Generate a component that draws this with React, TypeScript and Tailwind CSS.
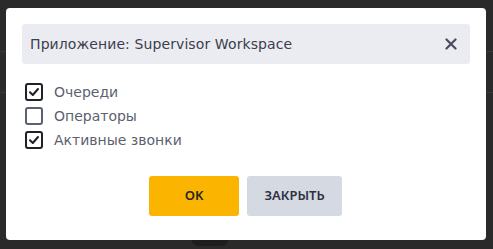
import React from "react";

function Check({ checked }: { checked: boolean }) {
  return (
    <span
      className={
        "flex h-[18px] w-[18px] shrink-0 items-center justify-center rounded-[3px] border-2 " +
        (checked ? "border-[#1f2128]" : "border-[#5b6072]")
      }
    >
      {checked && (
        <svg width="12" height="12" viewBox="0 0 12 12">
          <path d="M2 6.2 L4.8 9 L10 3" fill="none" stroke="#1f2128" strokeWidth="2" strokeLinecap="round" strokeLinejoin="round" />
        </svg>
      )}
    </span>
  );
}

export default function App() {
  const items = [
    { label: "Очереди", checked: true },
    { label: "Операторы", checked: false },
    { label: "Активные звонки", checked: true },
  ];
  return (
    <div
      className="relative flex h-[249px] w-[493px] flex-col bg-[#2a2a2a] pt-[8px] pl-[6px]"
      style={{ fontFamily: '"DejaVu Sans", "Noto Sans", sans-serif' }}
    >
      <div className="absolute left-0 right-0 top-[51px] h-px bg-[#383838]" />
      <div className="absolute left-0 right-0 top-[92px] h-px bg-[#383838]" />
      <div className="relative z-10 flex h-[232px] w-[480px] flex-col rounded-[4px] bg-white p-4">
        <div className="flex h-10 items-center justify-between rounded-[3px] bg-[#ebecf2] pl-2 pr-[13px]">
          <span className="text-[14px] tracking-[0.1px] text-[#3b3e4c]">Приложение: Supervisor Workspace</span>
          <svg width="12" height="12" viewBox="0 0 12 12">
            <path d="M1.5 1.5 L10.5 10.5 M10.5 1.5 L1.5 10.5" stroke="#4a4d5e" strokeWidth="2.2" strokeLinecap="round" />
          </svg>
        </div>
        <div className="mt-4 flex flex-col pl-[3px]">
          {items.map((it) => (
            <label key={it.label} className="flex h-6 items-center gap-[11px]">
              <Check checked={it.checked} />
              <span className="text-[14px] text-[#5c5f70]">{it.label}</span>
            </label>
          ))}
        </div>
        <div
          className="mt-6 flex justify-center gap-2 pr-px"
          style={{ fontFamily: '"Noto Sans", "DejaVu Sans", sans-serif' }}
        >
          <button className="h-10 w-[90px] rounded-[3px] bg-[#fbb400] text-[13px] font-semibold text-[#262626]">
            OK
          </button>
          <button className="h-10 w-[95px] rounded-[3px] bg-[#d5d9e2] text-[13px] font-semibold text-[#2e3040]">
            ЗАКРЫТЬ
          </button>
        </div>
      </div>
      <div className="absolute left-[192px] top-[240px] h-[6px] w-[36px] rounded-b-[6px] bg-[#1e1e1e]" />
    </div>
  );
}
